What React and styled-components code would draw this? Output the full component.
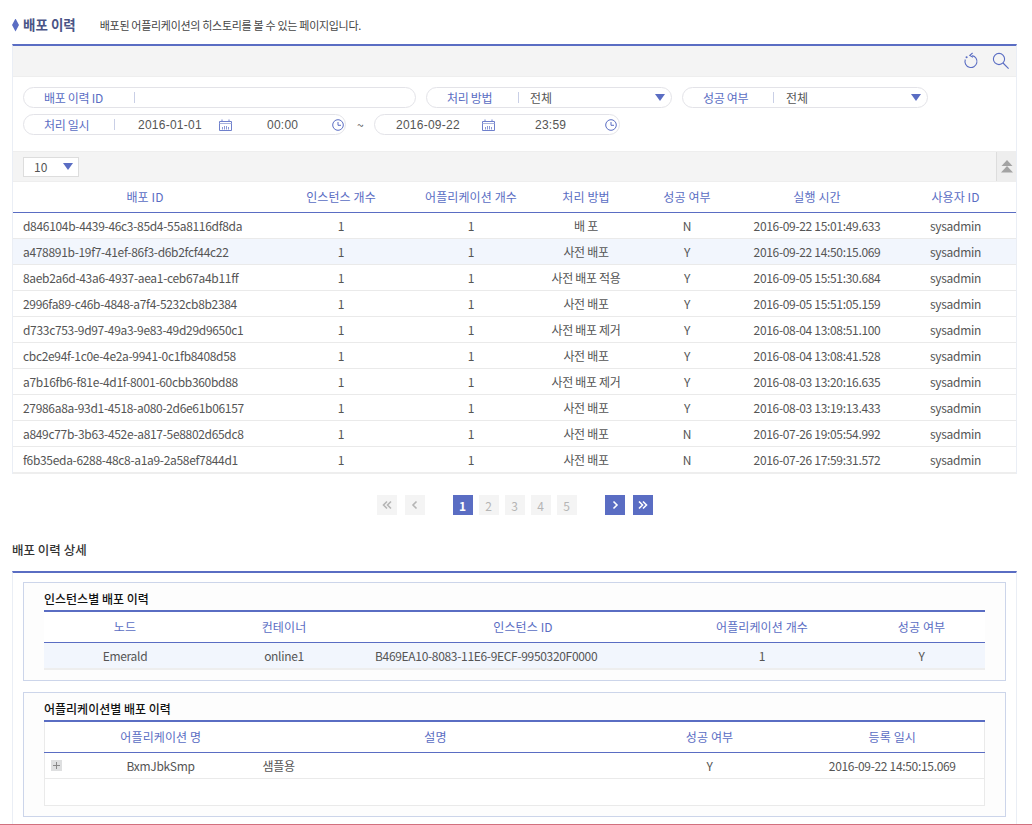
import React from 'react';
import styled, { createGlobalStyle } from 'styled-components';

const BLUE = '#5a6dc3';

const GlobalStyle = createGlobalStyle`
  html, body {
    margin: 0;
    padding: 0;
    height: 825px;
    overflow: hidden;
    background: #fff;
  }
  body {
    font-family: "Noto Sans CJK KR", "Noto Sans", sans-serif;
    font-size: 12px;
    color: #555;
  }
  * { box-sizing: border-box; }
`;

const Page = styled.div`
  width: 1032px;
  height: 825px;
  display: flex;
  flex-direction: column;
`;

const Content = styled.div`
  flex: 1;
  min-height: 0;
  padding: 0 15px 0 12px;
  display: flex;
  flex-direction: column;
`;

const Footer = styled.div`
  height: 1px;
  background: #d2707f;
`;

const TitleRow = styled.div`
  height: 44px;
  padding-top: 6px;
  display: flex;
  align-items: center;
`;

const Diamond = styled.span`
  width: 7px;
  height: 13px;
  flex: none;
  background: ${BLUE};
  clip-path: polygon(50% 0, 100% 50%, 50% 100%, 0 50%);
  margin-right: 4px;
`;

const Title = styled.h1`
  margin: -2px 24px 0 0;
  font-size: 13.5px;
  font-weight: 700;
  color: #4a5486;
  line-height: 20px;
`;

const Description = styled.span`
  font-size: 11px;
  letter-spacing: -0.3px;
  color: #444;
`;

const Section = styled.section`
  border-top: 2px solid ${BLUE};
  border-left: 1px solid #eaeef5;
  border-right: 1px solid #eaeef5;
  ${(p) => p.$grow && 'flex: 1;'}
`;

const Toolbar = styled.div`
  height: 31px;
  background: #f4f4f4;
  border-bottom: 1px solid #eee;
  display: flex;
  align-items: center;
  justify-content: flex-end;
  gap: 13px;
  padding: 0 6px 0 0;
`;

const IconButton = styled.button`
  border: 0;
  padding: 0;
  background: none;
  display: flex;
`;

const Filter = styled.div`
  height: 74px;
  padding: 10px 10px 0;
  display: flex;
  flex-direction: column;
  gap: 6px;
`;

const FilterRow = styled.div`
  display: flex;
  align-items: center;
  gap: 10px;
`;

const Pill = styled.div`
  width: ${(p) => p.$width}px;
  height: 21px;
  border: 1px solid #e3e3e8;
  border-radius: 11px;
  display: flex;
  align-items: center;
  flex: none;
`;

const FieldLabel = styled.span`
  width: ${(p) => p.$width}px;
  flex: none;
  padding-left: 20px;
  letter-spacing: -0.3px;
  color: ${BLUE};
  border-right: 1px solid #c9cfe6;
  height: 11px;
  display: flex;
  align-items: center;
  white-space: nowrap;
`;

const FieldValue = styled.span`
  flex: 1;
  padding-left: ${(p) => p.$pad || 11}px;
  color: #555;
`;

const Caret = styled.span`
  width: 0;
  height: 0;
  border-left: 5px solid transparent;
  border-right: 5px solid transparent;
  border-top: 7px solid ${BLUE};
  margin-right: ${(p) => p.$right ?? 6}px;
  flex: none;
`;

const DateText = styled.span`
  width: ${(p) => p.$width}px;
  margin-left: ${(p) => p.$left}px;
  flex: none;
  font-family: "Liberation Sans", sans-serif;
  letter-spacing: 0.25px;
  color: #555;
`;

const Icon = styled.svg`
  flex: none;
  margin-left: ${(p) => p.$left || 0}px;
`;

const Tilde = styled.span`
  width: 8px;
  margin: 0 -1px 0 1px;
  color: #555;
`;

const SizeBar = styled.div`
  height: 31px;
  background: #f4f4f4;
  border-top: 1px solid #eee;
  border-bottom: 1px solid #eee;
  display: flex;
  align-items: center;
  justify-content: space-between;
  padding-left: 10px;
`;

const SizeSelect = styled.div`
  width: 56px;
  height: 20px;
  background: #fff;
  border: 1px solid #ddd;
  display: flex;
  align-items: center;
  justify-content: space-between;
  padding-left: 10px;
`;

const Collapse = styled.button`
  width: 20px;
  height: 29px;
  border: 0;
  border-left: 1px solid #ddd;
  padding: 0;
  background: #eee;
  display: flex;
  align-items: center;
  justify-content: center;
`;

const Table = styled.table`
  width: 100%;
  border-collapse: collapse;
  table-layout: fixed;
  background: ${(p) => (p.$boxed ? '#fff' : 'transparent')};
  ${(p) => p.$boxed && `
    border-left: 1px solid #eaeaea;
    border-right: 1px solid #eaeaea;
  `}
`;

const Th = styled.th`
  height: 30px;
  padding: 0;
  padding-left: ${(p) => p.$pad || 0}px;
  font-weight: 400;
  letter-spacing: 0.1px;
  text-align: center;
  color: ${BLUE};
  background: #fff;
  border-bottom: 1px solid ${BLUE};
`;

const Row = styled.tr`
  background: ${(p) => (p.$active ? '#f2f6fd' : 'transparent')};
`;

const Td = styled.td`
  height: ${(p) => (p.$last ? 27 : 26)}px;
  padding: 0;
  padding-left: ${(p) => p.$pad || 0}px;
  text-align: ${(p) => p.$align || 'center'};
  letter-spacing: -0.32px;
  color: #555;
  border-bottom: ${(p) => (p.$last ? '2px solid #eee' : '1px solid #eaeaea')};
  white-space: nowrap;
`;

const Pager = styled.nav`
  height: 64px;
  padding-top: 21px;
  display: flex;
  justify-content: center;
  align-items: flex-start;
`;

const PageGroup = styled.div`
  display: flex;
  gap: ${(p) => p.$gap}px;
  margin: 0 14px;
`;

const PageButton = styled.button`
  width: 20px;
  height: 20px;
  border: 0;
  padding: 0;
  background: ${(p) => (p.$on ? BLUE : '#f4f4f4')};
  color: ${(p) => (p.$on ? '#fff' : '#b5b5b5')};
  font-family: inherit;
  font-size: 12px;
  font-weight: ${(p) => (p.$on ? 700 : 400)};
  display: flex;
  align-items: center;
  justify-content: center;
`;

const DetailTitle = styled.h2`
  margin: 0;
  height: 33px;
  font-size: 12.5px;
  font-weight: 500;
  color: #333;
  line-height: 24px;
`;

const DetailBody = styled.div`
  padding: 9px 10px 0;
  display: flex;
  flex-direction: column;
  gap: 11px;
`;

const Panel = styled.div`
  border: 1px solid #ccd5ea;
  background: #fdfdfd;
  padding: 5px 20px 10px;
`;

const PanelTitle = styled.h3`
  margin: 0;
  height: 24px;
  font-size: 12px;
  font-weight: 500;
  color: #111;
  line-height: 22px;
  border-bottom: 2px solid ${BLUE};
`;

const EmptyRow = styled.div`
  height: 27px;
  border: 1px solid #eaeaea;
  border-top: 0;
  background: #fff;
`;

const Expand = styled.span`
  width: 11px;
  height: 11px;
  background: #dedfe0;
  display: flex;
  align-items: center;
  justify-content: center;
  margin-left: 6px;
`;

const HISTORY_ROWS = [
  ['d846104b-4439-46c3-85d4-55a8116df8da', '배 포', 'N', '2016-09-22 15:01:49.633'],
  ['a478891b-19f7-41ef-86f3-d6b2fcf44c22', '사전 배포', 'Y', '2016-09-22 14:50:15.069'],
  ['8aeb2a6d-43a6-4937-aea1-ceb67a4b11ff', '사전 배포 적용', 'Y', '2016-09-05 15:51:30.684'],
  ['2996fa89-c46b-4848-a7f4-5232cb8b2384', '사전 배포', 'Y', '2016-09-05 15:51:05.159'],
  ['d733c753-9d97-49a3-9e83-49d29d9650c1', '사전 배포 제거', 'Y', '2016-08-04 13:08:51.100'],
  ['cbc2e94f-1c0e-4e2a-9941-0c1fb8408d58', '사전 배포', 'Y', '2016-08-04 13:08:41.528'],
  ['a7b16fb6-f81e-4d1f-8001-60cbb360bd88', '사전 배포 제거', 'Y', '2016-08-03 13:20:16.635'],
  ['27986a8a-93d1-4518-a080-2d6e61b06157', '사전 배포', 'Y', '2016-08-03 13:19:13.433'],
  ['a849c77b-3b63-452e-a817-5e8802d65dc8', '사전 배포', 'N', '2016-07-26 19:05:54.992'],
  ['f6b35eda-6288-48c8-a1a9-2a58ef7844d1', '사전 배포', 'N', '2016-07-26 17:59:31.572'],
];

const CalendarIcon = ({ left }) => (
  <Icon $left={left} width="13" height="12" viewBox="0 0 13 12" fill="none" stroke="#6f80cc">
    <path d="M.5 2.5h12v9H.5z" />
    <path d="M3 .5v2M10 .5v2" />
    <path d="M.5 4.5h12" stroke="#a9b3de" />
    <path d="M3.5 8v2.5M5.5 7v3.5M7.5 7v3.5M9.5 8v2.5" stroke="#8b99d6" />
  </Icon>
);

const ClockIcon = ({ left }) => (
  <Icon $left={left} width="12" height="12" viewBox="0 0 12 12" fill="none" stroke="#5a6dc3">
    <circle cx="6" cy="6" r="5.3" />
    <path d="M6 3v3.3h3" />
  </Icon>
);

const PagerChevrons = ({ dir, double, color }) => (
  <svg width="10" height="10" viewBox="0 0 10 10" fill="none" stroke={color} strokeWidth="1.6">
    {dir === 'left' ? (
      <>
        <path d={double ? 'M5 1.5 1.5 5 5 8.5' : 'M6.5 1.5 3 5l3.5 3.5'} />
        {double && <path d="M9 1.5 5.5 5 9 8.5" />}
      </>
    ) : (
      <>
        <path d={double ? 'M1 1.5 4.5 5 1 8.5' : 'M3.5 1.5 7 5 3.5 8.5'} />
        {double && <path d="M5 1.5 8.5 5 5 8.5" />}
      </>
    )}
  </svg>
);

const App = () => (
  <Page>
    <GlobalStyle />
    <Content>
      <TitleRow>
        <Diamond />
        <Title>배포 이력</Title>
        <Description>배포된 어플리케이션의 히스토리를 볼 수 있는 페이지입니다.</Description>
      </TitleRow>

      <Section>
        <Toolbar>
          <IconButton aria-label="reset">
            <svg width="16" height="18" viewBox="0 0 16 18" fill="none" stroke="#5a6dc3" strokeWidth="1.1">
              <path d="M9.2 3.6A6 6 0 1 1 2.3 7.5" />
              <path d="M9.6 1 6.8 3.4l3.2 1.8" />
              <circle cx="3.6" cy="5.2" r=".5" />
            </svg>
          </IconButton>
          <IconButton aria-label="search">
            <svg width="18" height="18" viewBox="0 0 18 18" fill="none" stroke="#5a6dc3" strokeWidth="1.1">
              <circle cx="7" cy="7" r="5.6" />
              <path d="m11 11 5.6 5.6" />
            </svg>
          </IconButton>
        </Toolbar>

        <Filter>
          <FilterRow>
            <Pill $width={393}>
              <FieldLabel $width={111}>배포 이력 ID</FieldLabel>
            </Pill>
            <Pill $width={246}>
              <FieldLabel $width={92}>처리 방법</FieldLabel>
              <FieldValue>전체</FieldValue>
              <Caret />
            </Pill>
            <Pill $width={246}>
              <FieldLabel $width={91}>성공 여부</FieldLabel>
              <FieldValue $pad={12}>전체</FieldValue>
              <Caret />
            </Pill>
          </FilterRow>
          <FilterRow>
            <Pill $width={323}>
              <FieldLabel $width={91}>처리 일시</FieldLabel>
              <DateText $width={65} $left={23}>2016-01-01</DateText>
              <CalendarIcon left={16} />
              <DateText $width={32} $left={35}>00:00</DateText>
              <ClockIcon left={33} />
            </Pill>
            <Tilde>~</Tilde>
            <Pill $width={246}>
              <DateText $width={65} $left={21}>2016-09-22</DateText>
              <CalendarIcon left={21} />
              <DateText $width={32} $left={40}>23:59</DateText>
              <ClockIcon left={38} />
            </Pill>
          </FilterRow>
        </Filter>

        <SizeBar>
          <SizeSelect>
            10
            <Caret $right={5} />
          </SizeSelect>
          <Collapse aria-label="collapse">
            <svg width="12" height="13" viewBox="0 0 12 13" fill="#a3a3a3">
              <path d="M6 0 11.5 6H.5z" />
              <path d="M6 6 12 12.5H0z" />
            </svg>
          </Collapse>
        </SizeBar>

        <Table>
          <colgroup>
            <col style={{ width: 264 }} />
            <col style={{ width: 128 }} />
            <col style={{ width: 132 }} />
            <col style={{ width: 98 }} />
            <col style={{ width: 104 }} />
            <col style={{ width: 156 }} />
            <col />
          </colgroup>
          <thead>
            <tr>
              <Th>배포 ID</Th>
              <Th>인스턴스 개수</Th>
              <Th>어플리케이션 개수</Th>
              <Th>처리 방법</Th>
              <Th>성공 여부</Th>
              <Th>실행 시간</Th>
              <Th>사용자 ID</Th>
            </tr>
          </thead>
          <tbody>
            {HISTORY_ROWS.map(([id, method, ok, time], i) => (
              <Row key={id} $active={i === 1}>
                <Td $align="left" $pad={10} $last={i === 9}>{id}</Td>
                <Td $last={i === 9}>1</Td>
                <Td $last={i === 9}>1</Td>
                <Td $last={i === 9}>{method}</Td>
                <Td $last={i === 9}>{ok}</Td>
                <Td $last={i === 9}>{time}</Td>
                <Td $last={i === 9}>sysadmin</Td>
              </Row>
            ))}
          </tbody>
        </Table>
      </Section>

      <Pager>
        <PageGroup $gap={8}>
          <PageButton><PagerChevrons dir="left" double color="#b5b5b5" /></PageButton>
          <PageButton><PagerChevrons dir="left" color="#b5b5b5" /></PageButton>
        </PageGroup>
        <PageGroup $gap={6}>
          <PageButton $on>1</PageButton>
          <PageButton>2</PageButton>
          <PageButton>3</PageButton>
          <PageButton>4</PageButton>
          <PageButton>5</PageButton>
        </PageGroup>
        <PageGroup $gap={8}>
          <PageButton $on><PagerChevrons dir="right" color="#fff" /></PageButton>
          <PageButton $on><PagerChevrons dir="right" double color="#fff" /></PageButton>
        </PageGroup>
      </Pager>

      <DetailTitle>배포 이력 상세</DetailTitle>
      <Section $grow>
        <DetailBody>
          <Panel>
            <PanelTitle>인스턴스별 배포 이력</PanelTitle>
            <Table>
              <colgroup>
                <col style={{ width: 162 }} />
                <col style={{ width: 156 }} />
                <col style={{ width: 322 }} />
                <col style={{ width: 156 }} />
                <col />
              </colgroup>
              <thead>
                <tr>
                  <Th>노드</Th>
                  <Th>컨테이너</Th>
                  <Th>인스턴스 ID</Th>
                  <Th>어플리케이션 개수</Th>
                  <Th $pad={18}>성공 여부</Th>
                </tr>
              </thead>
              <tbody>
                <Row $active>
                  <Td $last>Emerald</Td>
                  <Td $last>online1</Td>
                  <Td $last $align="left" $pad={13}>B469EA10-8083-11E6-9ECF-9950320F0000</Td>
                  <Td $last>1</Td>
                  <Td $last $pad={18}>Y</Td>
                </Row>
              </tbody>
            </Table>
          </Panel>

          <Panel>
            <PanelTitle>어플리케이션별 배포 이력</PanelTitle>
            <Table $boxed>
              <colgroup>
                <col style={{ width: 24 }} />
                <col style={{ width: 184 }} />
                <col style={{ width: 366 }} />
                <col style={{ width: 182 }} />
                <col />
              </colgroup>
              <thead>
                <tr>
                  <Th colSpan={2} $pad={24}>어플리케이션 명</Th>
                  <Th>설명</Th>
                  <Th>성공 여부</Th>
                  <Th>등록 일시</Th>
                </tr>
              </thead>
              <tbody>
                <Row>
                  <Td $align="left">
                    <Expand>
                      <svg width="7" height="7" viewBox="0 0 7 7" stroke="#888">
                        <path d="M3.5 0v7M0 3.5h7" />
                      </svg>
                    </Expand>
                  </Td>
                  <Td>BxmJbkSmp</Td>
                  <Td $align="left" $pad={10}>샘플용</Td>
                  <Td>Y</Td>
                  <Td>2016-09-22 14:50:15.069</Td>
                </Row>
              </tbody>
            </Table>
            <EmptyRow />
          </Panel>
        </DetailBody>
      </Section>
    </Content>
    <Footer />
  </Page>
);

export default App;
